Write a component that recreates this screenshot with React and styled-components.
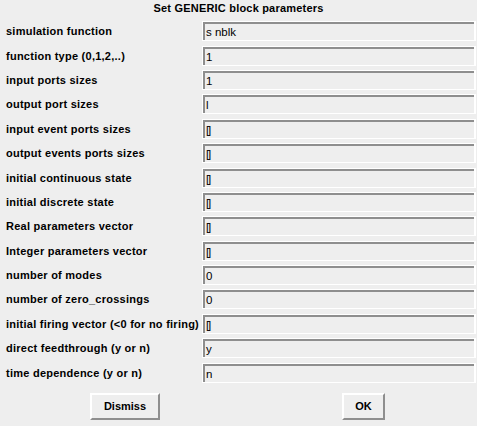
import styled, { createGlobalStyle } from "styled-components";

const GlobalStyle = createGlobalStyle`
  html, body {
    margin: 0;
    padding: 0;
    background: #eeeeee;
  }
  body {
    font-family: "Liberation Sans", Arial, sans-serif;
  }
`;

const params = [
  ["simulation function", "s nblk"],
  ["function type (0,1,2,..)", "1"],
  ["input ports sizes", "1"],
  ["output port sizes", "l"],
  ["input event ports sizes", "[]"],
  ["output events ports sizes", "[]"],
  ["initial continuous state", "[]"],
  ["initial discrete state", "[]"],
  ["Real parameters vector", "[]"],
  ["Integer parameters vector", "[]"],
  ["number of modes", "0"],
  ["number of zero_crossings", "0"],
  ["initial firing vector (<0 for no firing)", "[]"],
  ["direct feedthrough (y or n)", "y"],
  ["time dependence (y or n)", "n"],
];

const App = () => {
  return (
    <Window>
      <GlobalStyle />
      <Title>Set GENERIC block parameters</Title>
      <Form>
        {params.map(([label, value]) => (
          <Row key={label}>
            <Label>{label}</Label>
            <Entry>
              <Value $empty={value === "[]"}>{value}</Value>
            </Entry>
          </Row>
        ))}
      </Form>
      <Buttons>
        <ButtonCell>
          <Button $w={70}>Dismiss</Button>
        </ButtonCell>
        <ButtonCell>
          <Button $w={43}>OK</Button>
        </ButtonCell>
      </Buttons>
    </Window>
  );
};

const Window = styled.div`
  width: 477px;
  height: 426px;
  background: #eeeeee;
  display: flex;
  flex-direction: column;
  overflow: hidden;
`;

const Title = styled.div`
  height: 20px;
  padding-top: 2px;
  box-sizing: border-box;
  text-align: center;
  font-size: 11px;
  font-weight: bold;
  letter-spacing: 0.2px;
  color: #000;
`;

const Form = styled.div`
  display: flex;
  flex-direction: column;
  padding-top: 1px;
`;

const Row = styled.div`
  display: grid;
  grid-template-columns: 202px 1fr;
  align-items: center;
  height: 24.4px;
  padding-right: 1px;
`;

const Label = styled.div`
  padding-left: 6px;
  font-size: 11px;
  font-weight: bold;
  letter-spacing: 0.25px;
  color: #000;
  white-space: nowrap;
  margin-top: -4px;
`;

const Entry = styled.div`
  height: 20px;
  box-sizing: border-box;
  border: 1px solid #ffffff;
  border-right-width: 2px;
  box-shadow: inset 2px 2px 0 #8e8e8e;
  background: #eeeeee;
  display: flex;
  align-items: center;
  padding-left: 3px;
  margin-top: -4px;
`;

const Value = styled.span`
  font-size: 11.5px;
  color: #000;
  padding-top: 2px;
  letter-spacing: ${(p) => (p.$empty ? "-1.2px" : "0")};
`;

const Buttons = styled.div`
  display: grid;
  grid-template-columns: 250px 1fr;
  padding-top: 6px;
`;

const ButtonCell = styled.div`
  display: flex;
  justify-content: center;
`;

const Button = styled.div`
  width: ${(p) => p.$w}px;
  height: 27px;
  box-sizing: border-box;
  border: 2px solid;
  border-color: #ffffff #8e8e8e #8e8e8e #ffffff;
  display: flex;
  align-items: center;
  justify-content: center;
  font-size: 11px;
  font-weight: bold;
  color: #000;
`;

export default App;
